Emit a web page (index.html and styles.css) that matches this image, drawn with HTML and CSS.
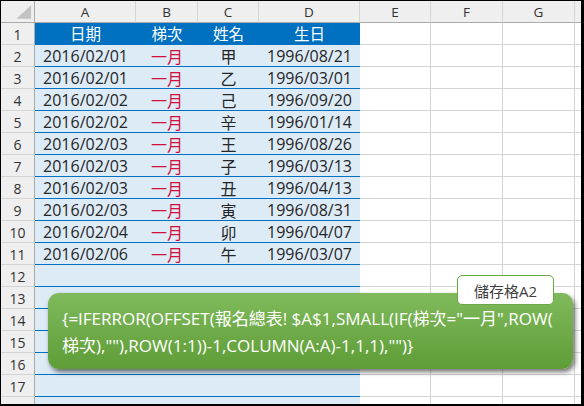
FILE: index.html
```html
<!DOCTYPE html>
<html>
<head>
<meta charset="utf-8">
<link rel="stylesheet" href="styles.css">
</head>
<body>
<div class="frame">
  <div class="sheet">
    <div class="corner"><svg width="34" height="22" viewBox="0 0 34 22"><polygon points="16,18 31,18 31,4" fill="#c3c3c3"/></svg></div>
    <div class="ch">A</div><div class="ch">B</div><div class="ch">C</div><div class="ch">D</div><div class="ch">E</div><div class="ch">F</div><div class="ch">G</div><div class="ch"></div>

    <div class="rh">1</div><div class="hd">日期</div><div class="hd">梯次</div><div class="hd">姓名</div><div class="hd">生日</div><div class="c"></div><div class="c"></div><div class="c"></div><div class="c"></div>

    <div class="rh">2</div><div class="d">2016/02/01</div><div class="d red">一月</div><div class="d">甲</div><div class="d">1996/08/21</div><div class="c"></div><div class="c"></div><div class="c"></div><div class="c"></div>
    <div class="rh">3</div><div class="d">2016/02/01</div><div class="d red">一月</div><div class="d">乙</div><div class="d">1996/03/01</div><div class="c"></div><div class="c"></div><div class="c"></div><div class="c"></div>
    <div class="rh">4</div><div class="d">2016/02/02</div><div class="d red">一月</div><div class="d">己</div><div class="d">1996/09/20</div><div class="c"></div><div class="c"></div><div class="c"></div><div class="c"></div>
    <div class="rh">5</div><div class="d">2016/02/02</div><div class="d red">一月</div><div class="d">辛</div><div class="d">1996/01/14</div><div class="c"></div><div class="c"></div><div class="c"></div><div class="c"></div>
    <div class="rh">6</div><div class="d">2016/02/03</div><div class="d red">一月</div><div class="d">王</div><div class="d">1996/08/26</div><div class="c"></div><div class="c"></div><div class="c"></div><div class="c"></div>
    <div class="rh">7</div><div class="d">2016/02/03</div><div class="d red">一月</div><div class="d">子</div><div class="d">1996/03/13</div><div class="c"></div><div class="c"></div><div class="c"></div><div class="c"></div>
    <div class="rh">8</div><div class="d">2016/02/03</div><div class="d red">一月</div><div class="d">丑</div><div class="d">1996/04/13</div><div class="c"></div><div class="c"></div><div class="c"></div><div class="c"></div>
    <div class="rh">9</div><div class="d">2016/02/03</div><div class="d red">一月</div><div class="d">寅</div><div class="d">1996/08/31</div><div class="c"></div><div class="c"></div><div class="c"></div><div class="c"></div>
    <div class="rh">10</div><div class="d">2016/02/04</div><div class="d red">一月</div><div class="d">卯</div><div class="d">1996/04/07</div><div class="c"></div><div class="c"></div><div class="c"></div><div class="c"></div>
    <div class="rh">11</div><div class="d">2016/02/06</div><div class="d red">一月</div><div class="d">午</div><div class="d">1996/03/07</div><div class="c"></div><div class="c"></div><div class="c"></div><div class="c"></div>
    <div class="rh">12</div><div class="d"></div><div class="d"></div><div class="d"></div><div class="d"></div><div class="c"></div><div class="c"></div><div class="c"></div><div class="c"></div>
    <div class="rh">13</div><div class="d"></div><div class="d"></div><div class="d"></div><div class="d"></div><div class="c"></div><div class="c"></div><div class="c"></div><div class="c"></div>
    <div class="rh">14</div><div class="d"></div><div class="d"></div><div class="d"></div><div class="d"></div><div class="c"></div><div class="c"></div><div class="c"></div><div class="c"></div>
    <div class="rh">15</div><div class="d"></div><div class="d"></div><div class="d"></div><div class="d"></div><div class="c"></div><div class="c"></div><div class="c"></div><div class="c"></div>
    <div class="rh">16</div><div class="d"></div><div class="d"></div><div class="d"></div><div class="d"></div><div class="c"></div><div class="c"></div><div class="c"></div><div class="c"></div>
    <div class="rh">17</div><div class="d"></div><div class="d"></div><div class="d"></div><div class="d"></div><div class="c"></div><div class="c"></div><div class="c"></div><div class="c"></div>
    <div class="rh">18</div><div class="d"></div><div class="d"></div><div class="d"></div><div class="d"></div><div class="c"></div><div class="c"></div><div class="c"></div><div class="c"></div>
  </div>
  <div class="callout">
    <div class="formula">{=IFERROR(OFFSET(報名總表! $A$1,SMALL(IF(梯次="一月",ROW(<br>梯次),""),ROW(1:1))-1,COLUMN(A:A)-1,1,1),"")}</div>
  </div>
  <div class="label">儲存格A2</div>
</div>
</body>
</html>
```
FILE: styles.css
```css
html, body {
  margin: 0;
  padding: 0;
  background: #fff;
}
.frame {
  position: relative;
  width: 584px;
  height: 406px;
  box-sizing: border-box;
  border-top: 1px solid #000;
  border-left: 1px solid #000;
  border-right: 3px solid #000;
  border-bottom: 2px solid #000;
  overflow: hidden;
  font-family: "Open Sans", "Noto Sans CJK TC", sans-serif;
}
.sheet {
  display: grid;
  grid-template-columns: 34px 101px 62px 61px 101px 71px 72px 72px 20px;
  grid-auto-rows: 22px;
}
.sheet > div {
  box-sizing: border-box;
  display: flex;
  align-items: center;
  justify-content: center;
  white-space: nowrap;
  overflow: hidden;
}
.corner {
  background: #efefef;
  border-right: 1px solid #ababab;
  border-bottom: 1px solid #ababab;
}
.corner svg { display: block; }
.ch {
  background: #efefef;
  border-right: 1px solid #d4d4d4;
  border-bottom: 1px solid #ababab;
  color: #333;
  font-size: 13.5px;
}
.rh {
  background: #efefef;
  border-right: 1px solid #ababab;
  border-bottom: 1px solid #d4d4d4;
  color: #333;
  font-size: 14px;
  padding-top: 1px;
}
.hd {
  background: #0070c0;
  color: #fff;
  font-size: 15.5px;
  border-bottom: 1px solid #0070c0;
}
.d {
  background: #ddebf7;
  border-bottom: 1px solid #0070c0;
  color: #262626;
  font-size: 16px;
}
.red { color: #d0103a; }
.c {
  border-right: 1px solid #d4d4d4;
  border-bottom: 1px solid #d4d4d4;
}
.callout {
  position: absolute;
  left: 47px;
  top: 292px;
  width: 525px;
  height: 76px;
  border-radius: 11px;
  background: linear-gradient(#80ba5c, #5e9d36);
  box-shadow: 2px 3px 5px rgba(0, 0, 0, 0.55);
  box-sizing: border-box;
  padding: 12px 0 0 14px;
}
.formula {
  color: #fff;
  font-size: 17px;
  line-height: 27px;
  white-space: nowrap;
}
.label {
  position: absolute;
  left: 456px;
  top: 274px;
  width: 97px;
  height: 30px;
  box-sizing: border-box;
  background: #fff;
  border: 1px solid #6aa843;
  border-radius: 5px;
  color: #404040;
  font-size: 15px;
  display: flex;
  align-items: center;
  justify-content: center;
}
```
